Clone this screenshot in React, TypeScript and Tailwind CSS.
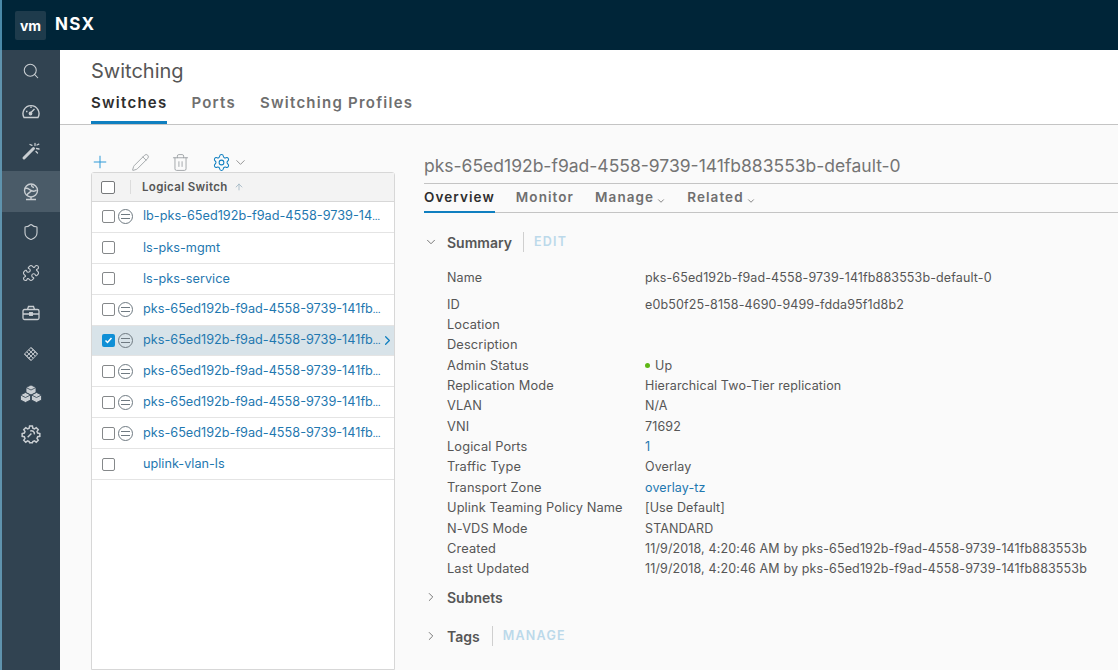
import { ArrowUp, ChevronDown, ChevronRight, Pencil, Plus, Puzzle, Search, Settings, Shield, Trash2 } from "lucide-react";

const font = "font-['Inter',sans-serif]";

function GaugeIcon() {
    return (
        <svg width="20" height="20" viewBox="0 0 20 20" fill="none" stroke="currentColor" strokeWidth="1.4">
            <path d="M3 16.500a8 8 0 1 1 14 0z" />
            <path d="M9 12.500l4.500-4.500M5 10.500h1.500M10 5.500v1.500" />
            <circle cx="9.500" cy="12.500" r="1.200" fill="currentColor" />
        </svg>
    );
}

function WandIcon() {
    return (
        <svg width="20" height="20" viewBox="0 0 20 20" fill="none" stroke="currentColor" strokeLinecap="round">
            <path d="M3 17L12.500 7.500" strokeWidth="3" />
            <path d="M9 3.500l2 .8M14 2.500v2M16 4l1.800 -.8M15.500 7.500l2.500 .5M15 10.500l1.500 1.500" strokeWidth="1.300" />
        </svg>
    );
}

function GlobeIcon() {
    return (
        <svg width="20" height="20" viewBox="0 0 20 20" fill="none" stroke="currentColor" strokeWidth="1.4">
            <circle cx="10" cy="8.500" r="6.500" />
            <path d="M4 6.500c3 -1 4 1 6 2s4 1 5.500 -.5M6 13c1 -2 3 -2.500 4 -4M11 2.500c-1 1.500 0 2.500 2 3" />
            <path d="M5 17.500h10M10 15v2.500" />
        </svg>
    );
}

function ToolboxIcon() {
    return (
        <svg width="20" height="20" viewBox="0 0 20 20" fill="none" stroke="currentColor" strokeWidth="1.300">
            <rect x="2" y="6.500" width="16" height="10" rx="1.500" />
            <path d="M6.500 6.500l1 -3h5l1 3M2 11h16" />
            <rect x="8.700" y="9.700" width="2.600" height="2.600" fill="currentColor" />
        </svg>
    );
}

function MeshIcon() {
    return (
        <svg width="16" height="16" viewBox="0 0 16 16" fill="none" stroke="currentColor" strokeWidth="1">
            <path d="M8 1.500L14.500 8 8 14.500 1.500 8z" />
            <path d="M5.800 3.700L12.300 10.200M3.700 5.800L10.200 12.300M10.200 3.700L3.700 10.200M12.300 5.800L5.800 12.300" />
            <path d="M8 1.500L14.500 8M8 14.500L1.500 8" />
        </svg>
    );
}

function CubesIcon() {
    return (
        <svg width="24" height="20" viewBox="0 0 24 20" fill="currentColor" stroke="#314351" strokeWidth="0.8">
            <path d="M12 1l5 2.500v5l-5 2.500-5 -2.500v-5z" />
            <path d="M6.500 8.500l5 2.500v5l-5 2.500-5 -2.500v-5z" />
            <path d="M17.500 8.500l5 2.500v5l-5 2.500-5 -2.500v-5z" />
            <path d="M7 3.500l5 2.500 5 -2.500M1.500 11l5 2.500 5 -2.500M12.500 11l5 2.500 5 -2.500" fill="none" />
        </svg>
    );
}

function GearWrenchIcon() {
    return (
        <svg width="20" height="20" viewBox="0 0 24 24" fill="none" stroke="currentColor" strokeWidth="1.800">
            <path d="M10.300 2.500h3.400l.5 2.600 1.900.8 2.200-1.500 2.400 2.400-1.500 2.200.8 1.900 2.600.5v3.400l-2.600.5-.8 1.900 1.500 2.200-2.400 2.400-2.200-1.500-1.900.8-.5 1.400h-3.400l-.5-1.400-1.900-.8-2.200 1.500-2.400-2.400 1.500-2.200-.8-1.900-2.600-.5v-3.400l2.600-.5.8-1.900-1.500-2.200 2.400-2.400 2.200 1.500 1.900-.8z" />
            <path d="M8 16l4.500-4.500M11 8.500a3.500 3.500 0 0 1 5 4" />
        </svg>
    );
}

function BlockedIcon() {
    return (
        <span className="flex h-[15px] w-[15px] shrink-0 items-center justify-center rounded-full border border-[#6f7a82]">
            <span className="h-[5px] w-[9px] border-y border-[#6f7a82]" />
        </span>
    );
}

function Checkbox({ checked, large }: { checked?: boolean; large?: boolean }) {
    if (checked) {
        return (
            <span className="flex h-[13px] w-[13px] shrink-0 items-center justify-center rounded-[2px] bg-[#0f8fd6]">
                <svg width="9" height="9" viewBox="0 0 9 9" fill="none" stroke="white" strokeWidth="1.500">
                    <path d="M1.500 4.500l2 2 4-4.500" />
                </svg>
            </span>
        );
    }
    return <span className={`${large ? "h-[13px] w-[14px] border-[#77797b]" : "h-[13px] w-[13px] border-[#85888a]"} shrink-0 rounded-[2px] border bg-white`} />;
}

const sidebarIcons = [
    { icon: <Search size={18} strokeWidth={1.4} />, h: "h-[41px]" },
    { icon: <GaugeIcon />, h: "h-[40px]" },
    { icon: <WandIcon />, h: "h-[40px]" },
    { icon: <GlobeIcon />, h: "h-[41px]", active: true },
    { icon: <Shield size={18} strokeWidth={1.5} />, h: "h-[40px]" },
    { icon: <Puzzle size={18} strokeWidth={1.5} />, h: "h-[41px]" },
    { icon: <ToolboxIcon />, h: "h-[40px]" },
    { icon: <MeshIcon />, h: "h-[41px]" },
    { icon: <CubesIcon />, h: "h-[40px]" },
    { icon: <GearWrenchIcon />, h: "h-[40px]" },
];

const rows = [
    { name: "lb-pks-65ed192b-f9ad-4558-9739-14", blocked: true, cut: true },
    { name: "ls-pks-mgmt" },
    { name: "ls-pks-service" },
    { name: "pks-65ed192b-f9ad-4558-9739-141fb", blocked: true, cut: true },
    { name: "pks-65ed192b-f9ad-4558-9739-141fb", blocked: true, cut: true, selected: true },
    { name: "pks-65ed192b-f9ad-4558-9739-141fb", blocked: true, cut: true },
    { name: "pks-65ed192b-f9ad-4558-9739-141fb", blocked: true, cut: true },
    { name: "pks-65ed192b-f9ad-4558-9739-141fb", blocked: true, cut: true },
    { name: "uplink-vlan-ls" },
];

const details: { label: string; value: string; link?: boolean; dot?: boolean }[] = [
    { label: "ID", value: "e0b50f25-8158-4690-9499-fdda95f1d8b2" },
    { label: "Location", value: "" },
    { label: "Description", value: "" },
    { label: "Admin Status", value: "Up", dot: true },
    { label: "Replication Mode", value: "Hierarchical Two-Tier replication" },
    { label: "VLAN", value: "N/A" },
    { label: "VNI", value: "71692" },
    { label: "Logical Ports", value: "1", link: true },
    { label: "Traffic Type", value: "Overlay" },
    { label: "Transport Zone", value: "overlay-tz", link: true },
    { label: "Uplink Teaming Policy Name", value: "[Use Default]" },
    { label: "N-VDS Mode", value: "STANDARD" },
    { label: "Created", value: "11/9/2018, 4:20:46 AM by pks-65ed192b-f9ad-4558-9739-141fb883553b" },
    { label: "Last Updated", value: "11/9/2018, 4:20:46 AM by pks-65ed192b-f9ad-4558-9739-141fb883553b" },
];

export default function App() {
    return (
        <div className={`${font} flex h-screen w-full flex-col overflow-hidden bg-[#fafafa] text-[#565656]`}>
            {/* top bar */}
            <div className="flex h-[50px] shrink-0 items-center gap-[9px] border-l-2 border-[#4a89a8] bg-[#002538] pl-[13px]">
                <div className="flex h-[29px] w-[31px] items-center justify-center rounded-[2px] bg-[#1e3b4c] text-[14px] font-bold text-white">vm</div>
                <p className="text-[17px] font-bold tracking-[0.08em] text-white">NSX</p>
            </div>
            <div className="flex min-h-0 flex-1">
                {/* sidebar */}
                <div className="flex w-[60px] shrink-0 flex-col border-l-2 border-[#5f93ad] bg-[#314351] text-[#c9ced2]">
                    {sidebarIcons.map((item, i) => (
                        <div key={i} className={`flex ${item.h} items-center justify-center ${item.active ? "bg-[#4a5b68]" : ""}`}>
                            {item.icon}
                        </div>
                    ))}
                </div>
                <div className="flex min-w-0 flex-1 flex-col">
                    {/* page title + tabs */}
                    <div className="h-[75px] shrink-0 border-b border-[#c4c4c4] bg-white pl-[31px] pt-[9px]">
                        <p className="text-[20px] leading-[24px] text-[#565656]">Switching</p>
                        <div className="mt-[5px] flex gap-[24px] text-[15px] font-semibold tracking-[0.083em] text-[#6f6f6f]">
                            <span className="h-[36px] border-b-[3px] border-[#0f7fc0] pt-[5px] leading-[20px] text-[#2e2e2e]">Switches</span>
                            <span className="pt-[5px] leading-[20px]">Ports</span>
                            <span className="pt-[5px] leading-[20px]">Switching Profiles</span>
                        </div>
                    </div>
                    <div className="flex min-h-0 flex-1 gap-[29px] pl-[31px]">
                        {/* switch list */}
                        <div className="flex w-[304px] shrink-0 flex-col pt-[27px]">
                            <div className="flex h-[20px] items-center pl-[1px] text-[#9a9ea1]">
                                <Plus size={20} strokeWidth={1.2} className="ml-[-2.500px] text-[#2f9ad8]" />
                                <Pencil size={19} strokeWidth={1.1} className="ml-[21px]" />
                                <Trash2 size={19} strokeWidth={1.1} className="ml-[21.500px]" />
                                <Settings size={19} strokeWidth={1.3} className="ml-[21.500px] text-[#0f7fc0]" />
                                <ChevronDown size={15} strokeWidth={1.4} className="ml-[2px] text-[#888]" />
                            </div>
                            <div className="flex min-h-0 flex-1 flex-col rounded-t-[3px] border border-[#d7d7d7] bg-white">
                                <div className="flex h-[29px] shrink-0 items-center border-b border-[#d7d7d7] bg-[#f3f3f3] pl-[9px]">
                                    <Checkbox large />
                                    <span className="ml-[15px] h-[14px] border-l border-[#dcdcdc]" />
                                    <span className="ml-[11px] mt-[1px] text-[11.500px] font-semibold tracking-[0.03em] text-[#565656]">Logical Switch</span>
                                    <ArrowUp size={10} className="ml-[6px] text-[#9fb4c2]" />
                                </div>
                                {rows.map((row, i) => (
                                    <div key={i} className={`flex h-[30.900px] shrink-0 items-center border-b border-[#e4e4e4] pl-[10px] ${row.selected ? "bg-[#d8e3e9]" : ""}`}>
                                        <Checkbox checked={row.selected} />
                                        <span className="ml-[3px] w-[15px] shrink-0">{row.blocked && <BlockedIcon />}</span>
                                        <span className="ml-[10px] w-[238px] whitespace-nowrap text-[12.700px] leading-[16px] text-[#1f78b0]">
                                            {row.name}
                                            {row.cut && <span className="text-[9px]">…</span>}
                                        </span>
                                        {row.selected && <ChevronRight size={15} strokeWidth={2} className="ml-[-1px] shrink-0 text-[#0f7fc0]" />}
                                    </div>
                                ))}
                            </div>
                        </div>
                        {/* detail pane */}
                        <div className="flex min-w-0 flex-1 flex-col pt-[28px]">
                            <p className="h-[31px] whitespace-nowrap border-b border-[#c4c4c4] text-[17.500px] leading-[26px] text-[#747474]">pks-65ed192b-f9ad-4558-9739-141fb883553b-default-0</p>
                            <div className="flex h-[29px] gap-[21px] border-b border-[#c4c4c4] text-[13.500px] font-semibold tracking-[0.08em] text-[#6f6f6f]">
                                <span className="h-[29px] border-b-2 border-[#0f7fc0] pt-[3px] leading-[20px] text-[#2e2e2e]">Overview</span>
                                <span className="pt-[3px] leading-[20px]">Monitor</span>
                                <span className="flex items-start gap-[2px] pt-[3px] leading-[20px]">Manage<ChevronDown size={10} className="mt-[9px]" /></span>
                                <span className="flex items-start gap-[2px] pt-[3px] leading-[20px]">Related<ChevronDown size={10} className="mt-[9px]" /></span>
                            </div>
                            <div className="mt-[19px] flex h-[20px] items-center">
                                <ChevronDown size={14} strokeWidth={1.5} className="text-[#666]" />
                                <span className="ml-[9px] text-[14px] font-semibold text-[#565656]">Summary</span>
                                <span className="ml-[11px] h-[20px] border-l border-[#cfcfcf]" />
                                <span className="ml-[10px] text-[12.500px] font-semibold tracking-[0.1em] text-[#bcd9ea]">EDIT</span>
                            </div>
                            <div className="mt-[16px] flex h-[20px] items-center pl-[23px] text-[12.500px] leading-[16px] tracking-[0.01em] text-[#565656]">
                                <span className="w-[198px] shrink-0">Name</span>
                                <span>pks-65ed192b-f9ad-4558-9739-141fb883553b-default-0</span>
                            </div>
                            <div className="mt-[6.400px] flex flex-col">
                                {details.map((d) => (
                                    <div key={d.label} className="flex h-[20.360px] items-center pl-[23px] text-[12.500px] leading-[16px] tracking-[0.01em] text-[#565656]">
                                        <span className="w-[198px] shrink-0 whitespace-nowrap text-[12.800px]">{d.label}</span>
                                        {d.dot && <span className="mr-[5px] h-[5px] w-[5px] rounded-full bg-[#5eb715]" />}
                                        <span className={`whitespace-nowrap ${d.link ? "text-[#1f78b0]" : ""}`}>{d.value}</span>
                                    </div>
                                ))}
                            </div>
                            <div className="mt-[8px] flex h-[20px] items-center">
                                <ChevronRight size={14} strokeWidth={1.5} className="text-[#666]" />
                                <span className="ml-[9px] text-[14px] font-semibold text-[#565656]">Subnets</span>
                            </div>
                            <div className="mt-[19px] flex h-[20px] items-center">
                                <ChevronRight size={14} strokeWidth={1.5} className="text-[#666]" />
                                <span className="ml-[9px] text-[14px] font-semibold text-[#565656]">Tags</span>
                                <span className="ml-[12px] h-[20px] border-l border-[#cfcfcf]" />
                                <span className="ml-[10px] text-[12.500px] font-semibold tracking-[0.1em] text-[#bcd9ea]">MANAGE</span>
                            </div>
                        </div>
                    </div>
                </div>
            </div>
        </div>
    );
}
